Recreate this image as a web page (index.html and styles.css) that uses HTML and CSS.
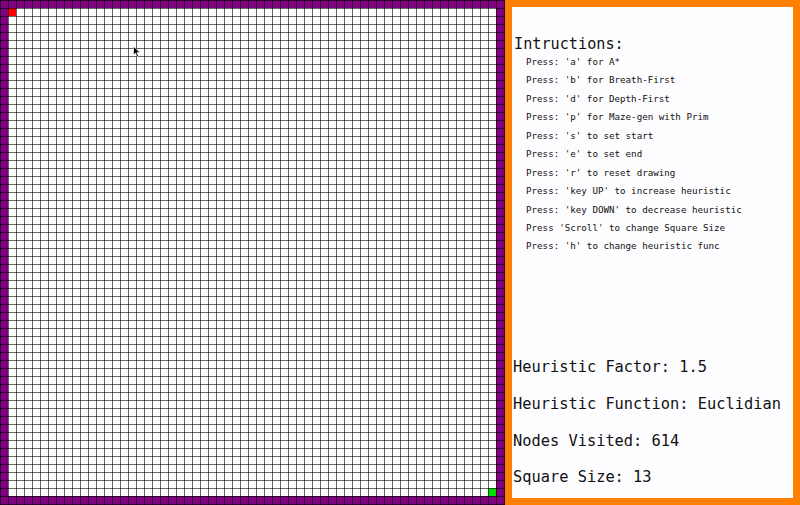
FILE: index.html
```html
<!DOCTYPE html>
<html>
<head>
<meta charset="utf-8">
<link rel="stylesheet" href="styles.css">
</head>
<body>
<div class="app">
  <div class="board">
    <div class="field">
      <div class="cell start"></div>
      <div class="cell end"></div>
    </div>
    <svg class="cursor" width="9" height="12" viewBox="0 0 9 12"><path d="M0.5 0.5 L0.5 9 L2.6 7 L4.1 10.6 L5.5 10 L4 6.6 L7 6.6 Z" fill="#000" stroke="#fff" stroke-width="0.6"/></svg>
  </div>
  <div class="panel">
    <h1 class="title">Intructions:</h1>
    <ul class="keys">
      <li>Press: 'a' for A*</li>
      <li>Press: 'b' for Breath-First</li>
      <li>Press: 'd' for Depth-First</li>
      <li>Press: 'p' for Maze-gen with Prim</li>
      <li>Press: 's' to set start</li>
      <li>Press: 'e' to set end</li>
      <li>Press: 'r' to reset drawing</li>
      <li>Press: 'key UP' to increase heuristic</li>
      <li>Press: 'key DOWN' to decrease heuristic</li>
      <li>Press 'Scroll' to change Square Size</li>
      <li>Press: 'h' to change heuristic func</li>
    </ul>
    <div class="stats">
      <p>Heuristic Factor: 1.5</p>
      <p>Heuristic Function: Euclidian</p>
      <p>Nodes Visited: 614</p>
      <p>Square Size: 13</p>
    </div>
  </div>
</div>
</body>
</html>
```
FILE: styles.css
```css
html, body {
  margin: 0;
  padding: 0;
  background: #fff;
}

.app {
  display: flex;
  width: 800px;
  height: 505px;
  overflow: hidden;
}

.board {
  position: relative;
  flex: none;
  width: 505px;
  height: 505px;
  box-sizing: border-box;
  padding: 8px 9px 9px 8px;
  background: #800080;
}

.board::after {
  content: "";
  position: absolute;
  inset: 0;
  background-image:
    linear-gradient(to right, rgba(0, 0, 0, 0.6) 1px, transparent 1px),
    linear-gradient(to bottom, rgba(0, 0, 0, 0.6) 1px, transparent 1px);
  background-size: 8px 8px;
  pointer-events: none;
}

.field {
  width: 488px;
  height: 488px;
  background: #fff;
  display: grid;
  grid-template-columns: repeat(61, 8px);
  grid-template-rows: repeat(61, 8px);
}

.start {
  grid-area: 1 / 1;
  background: #f00;
}

.end {
  grid-area: 61 / 61;
  background: #0d0;
}

.cursor {
  position: absolute;
  left: 133px;
  top: 46px;
  z-index: 2;
}

.panel {
  flex: 1;
  height: 505px;
  box-sizing: border-box;
  border: 7px solid #ff8000;
  background: #fdfcff;
  display: flex;
  flex-direction: column;
  padding: 28px 0 2px 0;
  font-family: "DejaVu Sans Mono", monospace;
  color: #111;
}

.title {
  margin: 0;
  padding-left: 2px;
  font-size: 15.2px;
  line-height: 18px;
  font-weight: normal;
}

.keys {
  list-style: none;
  margin: 0;
  padding: 0 0 0 14px;
  font-size: 9.2px;
  line-height: 18.43px;
  white-space: nowrap;
}

.stats {
  margin-top: auto;
  padding-left: 1px;
  font-size: 15.35px;
  line-height: 36.67px;
  white-space: nowrap;
}

.stats p {
  margin: 0;
}
```
